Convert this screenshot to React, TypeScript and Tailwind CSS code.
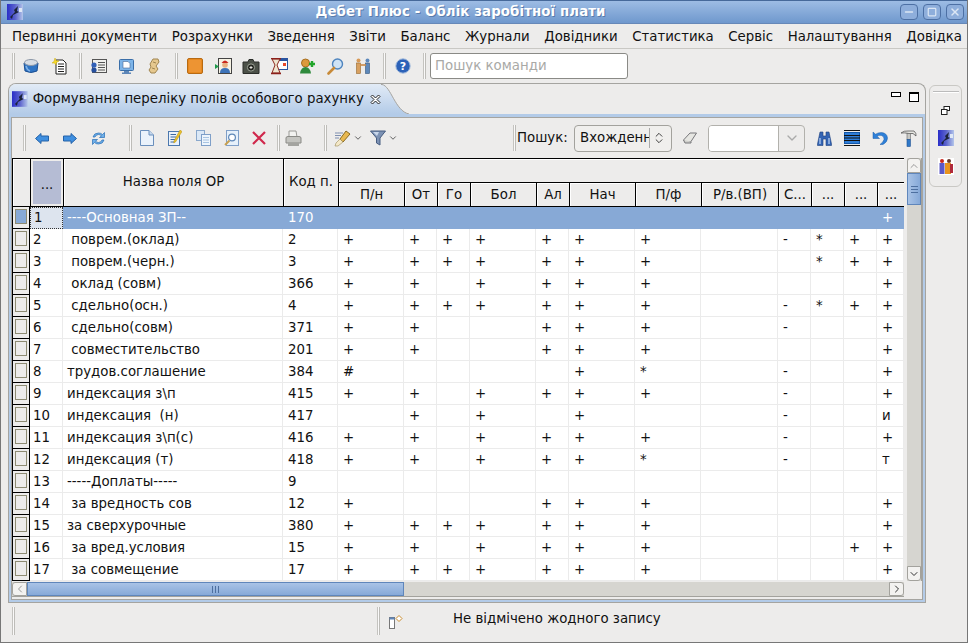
import React from 'react'
import { ChevronDown, ChevronLeft, ChevronRight, ChevronUp, ChevronsUpDown, Minus, Square, X } from 'lucide-react'

const menus = ['Первинні документи', 'Розрахунки', 'Зведення', 'Звіти', 'Баланс', 'Журнали', 'Довідники', 'Статистика', 'Сервіс', 'Налаштування', 'Довідка']

const subHeaders = ['П/н', 'От', 'Го', 'Бол', 'Ал', 'Нач', 'П/ф', 'Р/в.(ВП)', 'С...', '...', '...', '...']

const rows: [string, string, string][] = [
  ['----Основная ЗП--', '170', '           +'],
  [' поврем.(оклад)', '2', '+++++++ -*++'],
  [' поврем.(черн.)', '3', '+++++++  *++'],
  [' оклад (совм)', '366', '++ ++++    +'],
  [' сдельно(осн.)', '4', '+++++++ -*++'],
  [' сдельно(совм)', '371', '++  +++ -  +'],
  [' совместительство', '201', '++  +++    +'],
  ['трудов.соглашение', '384', '#    +* -  +'],
  ['индексация з\\п', '415', '++ ++++ -  +'],
  ['индексация  (н)', '417', ' + + +  -  и'],
  ['индексация з\\п(с)', '416', '++ ++++ -  +'],
  ['индексация (т)', '418', '++ +++* -  т'],
  ['-----Доплаты-----', '9', '            '],
  [' за вредность сов', '12', '+   +++    +'],
  ['за сверхурочные', '380', '+++++++    +'],
  [' за вред.условия', '15', '++ ++++   ++'],
  [' за совмещение', '17', '+++++++    +'],
]

const gridCols = 'grid grid-cols-[18px_33px_220px_55px_66px_33px_33px_66px_33px_66px_66px_77px_33px_33px_33px_27px]'

const AppIcon = ({ size = 16 }: { size?: number }) => (
  <svg width={size} height={size} viewBox="0 0 16 16">
    <defs>
      <linearGradient id="ai" x1="0" x2="1" y1="0" y2="0">
        <stop offset="0" stopColor="#2a2ec8" />
        <stop offset="0.5" stopColor="#5a62cc" />
        <stop offset="1" stopColor="#b4c6ea" />
      </linearGradient>
    </defs>
    <rect width="16" height="16" fill="url(#ai)" />
    <path d="M3 13 L8 8 L7 6 L11 2 L10 7 L12 8 L6 11 L5 15 Z" fill="#1a2238" />
    <rect x="12" y="4" width="3" height="4" fill="#dfe8f6" />
  </svg>
)

const Tub = () => (
  <svg width="16" height="16" viewBox="0 0 16 16">
    <path d="M1 5 L15 5 L14 13 Q8 16 2 13 Z" fill="#2f74c4" stroke="#1c4f92" />
    <ellipse cx="8" cy="4.5" rx="6.5" ry="3" fill="#d8dde4" stroke="#8d98a8" />
    <path d="M3 8 Q4 12 7 13" stroke="#7fb2e8" strokeWidth="1.5" fill="none" />
  </svg>
)

const NewDoc = () => (
  <svg width="17" height="17" viewBox="0 0 17 17">
    <path d="M5 2 H12 L15 5 V16 H5 Z" fill="#fff" stroke="#222" />
    <path d="M7 6 H13 M7 8.5 H13 M7 11 H13 M7 13.5 H13" stroke="#222" />
    <path d="M4 0 L5 2.5 L8 3 L5.5 4.5 L5 7 L3.5 5 L1 5 L3 3.5 Z" fill="#f6d92a" stroke="#c9a80f" strokeWidth=".5" />
  </svg>
)

const ListGear = () => (
  <svg width="17" height="16" viewBox="0 0 17 16">
    <rect x="2.5" y="1.5" width="14" height="13" fill="#f1f1ee" stroke="#555" />
    <path d="M8 4.5 H15 M8 7 H15 M8 9.5 H15 M8 12 H15" stroke="#555" />
    <circle cx="4" cy="7" r="2.6" fill="#3160b8" />
    <circle cx="4" cy="12" r="2.6" fill="#27509e" />
  </svg>
)

const Monitor = () => (
  <svg width="17" height="17" viewBox="0 0 17 17">
    <rect x="1.5" y="1.5" width="14" height="11" rx="1" fill="#7db4e8" stroke="#3a6ea8" />
    <path d="M5 3.5 H10 L12 5.5 V10 H5 Z" fill="#fff" stroke="#4a6a94" strokeWidth=".6" />
    <path d="M6 13 H11 V14.5 H13 V16 H4 V14.5 H6 Z" fill="#5d86b8" />
  </svg>
)

const ScrollIcon = () => (
  <svg width="12" height="16" viewBox="0 0 12 16">
    <path d="M5 1 H10 L11 4 L8 8 L10 11 L7 15 H3 L1 12 L3 9 L2 6 Z" fill="#e6c88e" stroke="#a08550" />
    <path d="M5 4 L8 5 M4 10 L7 11" stroke="#a08550" />
  </svg>
)

const OrangeBox = () => (
  <svg width="16" height="16" viewBox="0 0 16 16">
    <rect x=".5" y=".5" width="15" height="15" rx="1.5" fill="#e8891e" stroke="#b86a12" />
    <rect x="2" y="2" width="12" height="12" fill="#ed9433" />
  </svg>
)

const Portrait = () => (
  <svg width="17" height="16" viewBox="0 0 17 16">
    <rect x="3.5" y=".5" width="13" height="15" fill="#f6f2e4" stroke="#444" />
    <circle cx="10" cy="7" r="2.8" fill="#e8b080" />
    <path d="M6.5 5 Q10 0 13.5 5 Z" fill="#c8281e" />
    <path d="M5 15 Q5 10 10 10 Q15 10 15 15 Z" fill="#3c72b8" />
    <path d="M0 6 L4 8.5 L0 11 Z" fill="#1f9a4a" />
  </svg>
)

const Camera = () => (
  <svg width="18" height="15" viewBox="0 0 18 15">
    <path d="M1 3 H6 L7 0.5 H11 L12 3 H17 V14.5 H1 Z" fill="#4c5148" stroke="#2a2c28" />
    <circle cx="9" cy="8.5" r="3.6" fill="#23251f" stroke="#9aa094" />
    <path d="M7.5 8.5 H10.5 M9 7 V10" stroke="#e6e6e0" />
  </svg>
)

const Hourglass = () => (
  <svg width="17" height="17" viewBox="0 0 17 17">
    <rect x="5.5" y=".5" width="11" height="11" fill="#fff" stroke="#2a55a0" />
    <rect x="5.5" y=".5" width="11" height="2.5" fill="#2a55a0" />
    <rect x="12" y="5" width="3" height="3" fill="#e84a2a" />
    <path d="M1 1 H9 L6 7 L9 15 H1 L4 7 Z" fill="#eee6d0" stroke="#8c2a20" />
    <path d="M0 .5 H10 M0 15.5 H10" stroke="#8c1f1a" strokeWidth="1.6" />
  </svg>
)

const PersonAdd = () => (
  <svg width="17" height="16" viewBox="0 0 17 16">
    <circle cx="6.5" cy="5" r="4" fill="#dc9a3c" stroke="#a66e20" />
    <path d="M1 15.5 Q2 9 6.5 9 Q11 9 12 15.5 Z" fill="#2f8a3c" />
    <path d="M13 3 V9 M10 6 H16" stroke="#22a52a" strokeWidth="2.4" />
  </svg>
)

const Lens = () => (
  <svg width="17" height="17" viewBox="0 0 17 17">
    <circle cx="10.5" cy="6" r="5" fill="#cfe3f6" stroke="#4e84be" strokeWidth="1.4" />
    <path d="M7 10 L1.5 15.5" stroke="#c88a38" strokeWidth="2.6" strokeLinecap="round" />
  </svg>
)

const Handshake = () => (
  <svg width="16" height="16" viewBox="0 0 16 16">
    <circle cx="3.5" cy="2.5" r="2" fill="#d89a58" />
    <rect x="1.5" y="5" width="4" height="10.5" fill="#d8a060" stroke="#96682e" strokeWidth=".6" />
    <circle cx="12.5" cy="2.5" r="2" fill="#5c88bc" />
    <rect x="10.5" y="5" width="4" height="10.5" fill="#5d88ba" stroke="#34557e" strokeWidth=".6" />
    <path d="M5 7 H11" stroke="#c88a48" strokeWidth="1.6" />
  </svg>
)

const HelpIcon = () => (
  <svg width="16" height="16" viewBox="0 0 16 16">
    <circle cx="8" cy="8" r="7.2" fill="#2c62b8" stroke="#a5bcdc" />
    <text x="8" y="12" textAnchor="middle" fontSize="11" fontWeight="700" fill="#fff" fontFamily="DejaVu Sans">?</text>
  </svg>
)

const ArrowIcon = ({ dir }: { dir: 'left' | 'right' }) => (
  <svg width="14" height="11" viewBox="0 0 14 11">
    <path
      d={dir === 'left' ? 'M.5 5.5 L6 .5 V3 H13.5 V8 H6 V10.5 Z' : 'M13.5 5.5 L8 .5 V3 H.5 V8 H8 V10.5 Z'}
      fill="#3f8fe0"
      stroke="#2462a8"
    />
  </svg>
)

const Refresh = () => (
  <svg width="15" height="15" viewBox="0 0 15 15">
    <path d="M2 6 Q3 2 7.5 2 Q10 2 11.5 3.5 L13.5 1.5 V6.5 H8.5 L10.5 4.8 Q9 3.5 7.5 3.5 Q5 3.5 4 6 Z" fill="#6fb0ea" stroke="#2a6eb4" strokeWidth=".7" />
    <path d="M13 9 Q12 13 7.5 13 Q5 13 3.5 11.5 L1.5 13.5 V8.5 H6.5 L4.5 10.2 Q6 11.5 7.5 11.5 Q10 11.5 11 9 Z" fill="#6fb0ea" stroke="#2a6eb4" strokeWidth=".7" />
  </svg>
)

const Page = () => (
  <svg width="14" height="16" viewBox="0 0 14 16">
    <path d="M.5 .5 H9 L13.5 5 V15.5 H.5 Z" fill="#eaf2fb" stroke="#6a8fbc" />
    <path d="M9 .5 V5 H13.5" fill="#c4d8ee" stroke="#6a8fbc" />
  </svg>
)

const EditPage = () => (
  <svg width="14" height="16" viewBox="0 0 14 16">
    <rect x=".5" y="1.5" width="11" height="14" fill="#eaf2fb" stroke="#4c78ae" />
    <path d="M2.5 4.5 H8 M2.5 7 H8 M2.5 9.5 H7 M2.5 12 H6" stroke="#3c68a0" />
    <path d="M12 0 L14 1.5 L7.5 12 L5.8 13 L6 11 Z" fill="#ecc12a" stroke="#b08c10" strokeWidth=".5" />
  </svg>
)

const CopyPage = () => (
  <svg width="15" height="16" viewBox="0 0 15 16">
    <rect x=".5" y=".5" width="8" height="10" fill="#dbe8f6" stroke="#8aa8cc" />
    <rect x="5.5" y="4.5" width="9" height="11" fill="#eef5fc" stroke="#7f9fc8" />
    <path d="M7 7.5 H13 M7 10 H13 M7 12.5 H13" stroke="#a8c4e2" />
  </svg>
)

const FindPage = () => (
  <svg width="15" height="16" viewBox="0 0 15 16">
    <rect x="2.5" y=".5" width="12" height="15" fill="#e6f0fa" stroke="#7f9fc8" />
    <circle cx="8" cy="7.5" r="3.4" fill="#fff" stroke="#5f88b8" strokeWidth="1.2" />
    <path d="M5.5 10.5 L1 15" stroke="#c8a050" strokeWidth="2" />
  </svg>
)

const RedX = () => (
  <svg width="14" height="14" viewBox="0 0 14 14">
    <path d="M1 1 L13 13 M13 1 L1 13" stroke="#d0284c" strokeWidth="2.2" />
  </svg>
)

const Printer = () => (
  <svg width="17" height="17" viewBox="0 0 17 17">
    <path d="M4 1 H11 L12 7 H4 Z" fill="#f2f2f0" stroke="#9a9a96" />
    <path d="M1 8 Q1 6.5 3 6.5 H14 Q16 6.5 16 8 V13 H1 Z" fill="#c4c4c0" stroke="#8a8a86" />
    <rect x="3" y="13" width="11" height="3" fill="#a4a4a0" />
  </svg>
)

const Brush = () => (
  <svg width="17" height="17" viewBox="0 0 17 17">
    <path d="M12 1 L16 4 L9 12 L6 9 Z" fill="#e8b850" stroke="#8a6a20" />
    <path d="M6 9 L9 12 L4 16 L1 16 L2 13 Z" fill="#f4e8c8" stroke="#9a8a58" strokeWidth=".6" />
    <path d="M1 3 H9 M1 5.5 H7 M1 8 H5" stroke="#7f8fb0" />
  </svg>
)

const Funnel = () => (
  <svg width="16" height="16" viewBox="0 0 16 16">
    <path d="M.5 1 H15.5 L10 8 V15 L6.5 13 V8 Z" fill="#7d92b4" stroke="#465c80" />
    <path d="M3 2 H9 L7 6 Z" fill="#c8d6ea" />
  </svg>
)

const Eraser = () => (
  <svg width="14" height="12" viewBox="0 0 14 12">
    <path d="M.5 8 L7 1 H13.5 L8 9.5 H2 Z" fill="#e6e6e2" stroke="#77777a" />
    <path d="M.5 8 L2 11 H8 L8 9.5" fill="#cfcfcb" stroke="#77777a" />
  </svg>
)

const Binoculars = () => (
  <svg width="15" height="15" viewBox="0 0 15 15">
    <path d="M3 1 H6 V5 H9 V1 H12 L14.5 13 V14.5 H9 V8 H6 V14.5 H.5 V13 Z" fill="#3464b4" stroke="#1e3f7c" strokeWidth=".6" />
    <path d="M3 7 V13 M12 7 V13" stroke="#a8c4ec" strokeWidth="1.4" />
  </svg>
)

const Lines = () => (
  <svg width="16" height="16" viewBox="0 0 16 16">
    <rect x=".5" y="2.5" width="15" height="11" fill="#2f7ed8" stroke="#1256a8" />
    <path d="M0 .5 H16 M0 5.5 H16 M0 8 H16 M0 10.5 H16 M0 15.5 H16" stroke="#111" />
  </svg>
)

const UndoIcon = () => (
  <svg width="16" height="15" viewBox="0 0 16 15">
    <path d="M1 1 V7.5 H7.5 L5 5.2 Q7 4 9.5 4.5 Q12.5 5.5 12 8.5 Q11.5 11 8 13.5 H11 Q15.5 11 15.5 7 Q15 2 9.5 1.5 Q6 1.5 3.5 3.2 Z" fill="#2f80d8" stroke="#1a5ca8" strokeWidth=".5" />
  </svg>
)

const Hammer = () => (
  <svg width="17" height="17" viewBox="0 0 17 17">
    <path d="M1 3 Q4 .5 8 1 H14 Q16.5 3 16 6 L13 3.5 H9 Q4 2.5 1 3 Z" fill="#e6e6e2" stroke="#555" strokeWidth=".8" />
    <rect x="7" y="3.5" width="3.4" height="6" fill="#c8c8c4" stroke="#666" strokeWidth=".6" />
    <rect x="7" y="9.5" width="3.4" height="7" fill="#2f78c8" stroke="#1e5090" strokeWidth=".6" />
  </svg>
)

const People = () => (
  <svg width="16" height="17" viewBox="0 0 16 17">
    <rect width="16" height="17" fill="#fff" />
    <circle cx="4" cy="3" r="2" fill="#c8281e" />
    <circle cx="11" cy="3" r="2" fill="#6a3a2a" />
    <rect x="1.5" y="5" width="5" height="11" fill="#5a58c8" />
    <rect x="7" y="5" width="6" height="11" fill="#e8941e" />
    <rect x="12" y="6" width="3" height="9" fill="#b02a3a" />
  </svg>
)

const CloseTab = () => (
  <svg width="11" height="11" viewBox="0 0 11 11" className="ml-[6px] flex-none">
    <path d="M1 2.5 L2.5 1 L5.5 4 L8.5 1 L10 2.5 L7 5.5 L10 8.5 L8.5 10 L5.5 7 L2.5 10 L1 8.5 L4 5.5 Z" fill="#fff" stroke="#222" />
  </svg>
)

const Slot = ({ children }: { children: React.ReactNode }) => (
  <div className="w-7 flex-none flex items-center justify-center">{children}</div>
)

const Grip = ({ className = 'h-[26px]' }: { className?: string }) => (
  <div className={`w-[2px] flex-none border-l border-[#c4c3bf] bg-white/70 shadow-[1px_0_0_#bdbcb8] ${className}`} />
)

const Caret = () => <ChevronDown className="w-2.5 h-2.5 text-[#444]" strokeWidth={2} />

const ScrollButton = ({ children, className = '' }: { children: React.ReactNode; className?: string }) => (
  <div className={`flex-none flex items-center justify-center bg-[#f3f2f0] border border-[#a3a29d] text-[#333] ${className}`}>
    {children}
  </div>
)

function Cell({ text, selected, pad = 'pl-[5px]' }: { text: string; selected: boolean; pad?: string }) {
  return (
    <div className={`h-[22px] leading-[22px] whitespace-pre overflow-hidden ${pad} ${selected ? 'bg-[#87a9d6] text-white' : 'bg-white border-r border-b border-[#ebebeb] text-[#111]'}`}>
      {text}
    </div>
  )
}

function TableRow({ index, row }: { index: number; row: [string, string, string] }) {
  const selected = index === 0
  const marks = row[2].padEnd(12, ' ').split('')
  return (
    <div className={gridCols}>
      <div className="h-[22px] border-l border-r border-b border-black bg-[#edeceb] p-[2px] flex">
        <div className={`w-[13px] h-[15px] border border-[#8d8b73] ${selected ? 'bg-[#87a9d6]' : 'bg-[#edeceb]'}`} />
      </div>
      <div className={`h-[22px] pl-[3px] text-[#111] ${selected ? 'leading-[20px] bg-[#dde4ee] border border-dotted border-[#333]' : 'leading-[22px] bg-white border-r border-b border-[#ebebeb]'}`}>
        {index + 1}
      </div>
      <Cell text={row[0]} selected={selected} pad="pl-[4px]" />
      <Cell text={row[1]} selected={selected} />
      {marks.map((m, i) => (
        <Cell key={i} text={m === ' ' ? '' : m} selected={selected} />
      ))}
    </div>
  )
}

export default function App() {
  return (
    <div className="w-[968px] h-[643px] overflow-hidden flex flex-col bg-[#edeceb] border-l border-r border-b border-[#777] font-['DejaVu_Sans',sans-serif] text-[13.33px] text-[#111]">
      {/* title bar */}
      <div className="h-6 flex-none flex items-center pl-[6px] pr-[3px] border-t border-[#46699a] bg-gradient-to-b from-[#9dbce4] to-[#6f98cd] border-b border-b-[#6688b8]">
        <AppIcon />
        <div className="flex-1 text-center font-bold text-white tracking-[0.1px] pr-[2px] [text-shadow:1px_1px_0_#5a7cac]">Дебет Плюс - Облік заробітної плати</div>
        <div className="flex gap-[5px]">
          {[
            <Minus key="a" className="w-3 h-3" strokeWidth={3} />,
            <Square key="b" className="w-2.5 h-2.5" strokeWidth={3} />,
            <X key="c" className="w-3 h-3" strokeWidth={3} />,
          ].map((ic, i) => (
            <div key={i} className="w-[18px] h-[16px] rounded-[4px] border border-[#4d70a4] bg-[#8eaedb] flex items-center justify-center text-[#dbe6f4]">{ic}</div>
          ))}
        </div>
      </div>

      {/* menu */}
      <div className="h-[25px] flex-none flex items-center gap-[14.5px] pl-[11px] pt-[1px] border-b border-[#c9c8c4]">
        {menus.map((m) => (
          <span key={m} className="whitespace-nowrap">{m}</span>
        ))}
      </div>

      {/* main toolbar */}
      <div className="h-[34px] flex-none flex items-center pl-[11px]">
        <Grip />
        <div className="w-[3px]" />
        <Slot><Tub /></Slot>
        <Slot><NewDoc /></Slot>
        <div className="w-[6px]" />
        <Grip />
        <div className="w-[3px]" />
        <Slot><ListGear /></Slot>
        <Slot><Monitor /></Slot>
        <Slot><ScrollIcon /></Slot>
        <div className="w-[7px]" />
        <Grip />
        <div className="w-[4px]" />
        <Slot><OrangeBox /></Slot>
        <Slot><Portrait /></Slot>
        <Slot><Camera /></Slot>
        <Slot><Hourglass /></Slot>
        <Slot><PersonAdd /></Slot>
        <Slot><Lens /></Slot>
        <Slot><Handshake /></Slot>
        <div className="w-[6px]" />
        <Grip />
        <div className="w-[4px]" />
        <Slot><HelpIcon /></Slot>
        <div className="w-[6px]" />
        <Grip />
        <div className="w-[5px]" />
        <div className="w-[198px] h-[26px] bg-white border border-[#8a8a86] rounded-[3px] pl-[4px] leading-[24px] text-[#a9a9a6]">Пошук команди</div>
      </div>

      {/* workspace */}
      <div className="flex-1 min-h-0 flex items-start pl-[7px]">
        <div className="w-[918px] h-[520px] flex flex-col">
          {/* tab strip */}
          <div className="h-[31px] flex-none flex border-t border-l border-r border-[#a5a4a0] rounded-t-lg overflow-hidden">
            <div className="w-[372px] flex-none flex items-center pl-[3px] bg-gradient-to-b from-[#e2ebf6] to-[#b3cbe8]">
              <AppIcon />
              <span className="ml-[5px] whitespace-nowrap">Формування переліку полів особового рахунку</span>
              <CloseTab />
            </div>
            <svg width="30" height="30" viewBox="0 0 30 30" className="flex-none">
              <defs>
                <linearGradient id="tb" x1="0" x2="0" y1="0" y2="1">
                  <stop offset="0" stopColor="#e2ebf6" />
                  <stop offset="1" stopColor="#b3cbe8" />
                </linearGradient>
              </defs>
              <path d="M0 0 H1 C10 2 14 27 28 30 H0 Z" fill="url(#tb)" />
              <path d="M0 .5 H1 C10 2 14 27 28 30" fill="none" stroke="#a5a4a0" />
            </svg>
            <div className="flex-1 flex items-start justify-end gap-[8px] pt-[8px] pr-[6px]">
              <div className="w-[10px] h-[5px] border border-black bg-white" />
              <div className="w-[10px] h-[10px] border border-black border-t-2 bg-white" />
            </div>
          </div>

          {/* tab body */}
          <div className="flex-1 min-h-0 border-x border-b border-[#a5a4a0] flex flex-col">
            <div className="flex-1 min-h-0 border-x-2 border-b-2 border-t-[3px] border-[#b3cbe8] flex flex-col">
              <div className="flex-1 min-h-0 border border-[#a5a4a0] flex flex-col">
                {/* tab toolbar */}
                <div className="h-[40px] flex-none flex items-center pl-[11px]">
                  <Grip />
                  <div className="w-[3px]" />
                  <Slot><ArrowIcon dir="left" /></Slot>
                  <Slot><ArrowIcon dir="right" /></Slot>
                  <Slot><Refresh /></Slot>
                  <div className="w-[17px]" />
                  <Grip />
                  <div className="w-[2px]" />
                  <Slot><Page /></Slot>
                  <Slot><EditPage /></Slot>
                  <Slot><CopyPage /></Slot>
                  <Slot><FindPage /></Slot>
                  <Slot><RedX /></Slot>
                  <div className="w-[4px]" />
                  <Grip />
                  <Slot><Printer /></Slot>
                  <div className="w-[17px]" />
                  <Grip />
                  <div className="w-[8px]" />
                  <div className="w-[36px] flex-none flex items-center gap-[2px]"><Brush /><Caret /></div>
                  <div className="w-[36px] flex-none flex items-center gap-[2px]"><Funnel /><Caret /></div>
                  <div className="w-[107px]" />
                  <Grip />
                  <span className="ml-[2px] w-[57px] flex-none whitespace-nowrap">Пошук:</span>
                  <div className="w-[98px] h-[27px] flex-none flex items-center rounded-[4px] border border-[#a3a29d] bg-[#f0efed] pl-[5px] pr-[4px]">
                    <span className="w-[70px] overflow-hidden whitespace-nowrap border-r border-[#aaa]">Вхожденн</span>
                    <ChevronsUpDown className="ml-[2px] w-[14px] h-[14px] text-[#333]" strokeWidth={1.6} />
                  </div>
                  <div className="w-[36px] flex-none flex justify-center"><Eraser /></div>
                  <div className="w-[97px] h-[27px] flex-none flex rounded-[4px] border border-[#b2b1ac] overflow-hidden">
                    <div className="w-[70px] bg-white border-r border-[#b2b1ac]" />
                    <div className="flex-1 flex items-center justify-center"><ChevronDown className="w-4 h-4 text-[#aaa]" /></div>
                  </div>
                  <div className="w-[5px]" />
                  <Slot><Binoculars /></Slot>
                  <Slot><Lines /></Slot>
                  <Slot><UndoIcon /></Slot>
                  <Slot><Hammer /></Slot>
                </div>

                {/* grid + vertical scroll */}
                <div className="flex-1 min-h-0 flex">
                  <div className="w-[892px] flex-none flex flex-col">
                    <div className={`${gridCols} border-t border-black`}>
                      <div className="row-span-2 border-l border-b border-black shadow-[inset_1px_1px_0_#fff]" />
                      <div className="row-span-2 border-l border-b border-black p-[2px] flex">
                        <div className="flex-1 bg-[#b5bcd4] flex items-center justify-center pt-[5px]">...</div>
                      </div>
                      <div className="row-span-2 border-l border-b border-black shadow-[inset_1px_1px_0_#fff] flex items-center justify-center pb-[2px]">Назва поля ОР</div>
                      <div className="row-span-2 border-l border-b border-black shadow-[inset_1px_1px_0_#fff] flex items-center justify-center pb-[2px]">Код п.</div>
                      <div className="col-span-12 h-6 border-l border-b border-black shadow-[inset_1px_1px_0_#fff]" />
                      {subHeaders.map((h, i) => (
                        <div key={i} className="h-6 overflow-hidden border-l border-b border-black shadow-[inset_1px_1px_0_#fff] flex items-center justify-center">{h}</div>
                      ))}
                    </div>
                    {rows.map((r, i) => (
                      <TableRow key={i} index={i} row={r} />
                    ))}
                  </div>
                  <div className="ml-[3px] w-[15px] h-[423px] flex-none flex flex-col bg-[#d6d5d0] border-r border-[#a3a29d]">
                    <ScrollButton className="h-[15px] rounded-t-[3px]"><ChevronUp className="w-3 h-3 text-[#999]" /></ScrollButton>
                    <div className="h-[32px] flex-none bg-gradient-to-r from-[#a9c3e6] to-[#86a9d8] border border-[#5f86bb] flex items-center justify-center">
                      <svg width="7" height="7" viewBox="0 0 7 7"><path d="M0 .5 H7 M0 3.5 H7 M0 6.5 H7" stroke="#4d6f9f" /></svg>
                    </div>
                    <div className="flex-1" />
                    <ScrollButton className="h-[15px] rounded-b-[3px]"><ChevronDown className="w-3 h-3 text-[#333]" /></ScrollButton>
                  </div>
                </div>

                {/* horizontal scroll */}
                <div className="h-[15px] flex-none mb-[2px] w-[892px] flex bg-[#d6d5d0] border-b border-[#a3a29d]">
                  <ScrollButton className="w-[15px] rounded-l-[3px]"><ChevronLeft className="w-3 h-3 text-[#999]" /></ScrollButton>
                  <div className="w-[377px] flex-none bg-gradient-to-b from-[#a9c3e6] to-[#86a9d8] border border-[#5f86bb] flex items-center justify-center">
                    <svg width="7" height="7" viewBox="0 0 7 7"><path d="M.5 0 V7 M3.5 0 V7 M6.5 0 V7" stroke="#4d6f9f" /></svg>
                  </div>
                  <div className="flex-1" />
                  <ScrollButton className="w-[15px] rounded-r-[3px]"><ChevronRight className="w-3 h-3 text-[#333]" /></ScrollButton>
                </div>
              </div>
            </div>
          </div>
        </div>

        {/* right trim */}
        <div className="ml-[3px] mt-[2px] w-[33px] h-[102px] flex-none flex flex-col items-center border border-[#c9c8c4] rounded-[6px]">
          <div className="mt-[5px] w-[26px] border-t border-[#bbb] shadow-[0_1px_0_#fff]" />
          <svg width="9" height="9" viewBox="0 0 9 9" className="mt-[14px]">
            <rect x="3" y=".5" width="5.5" height="4" fill="#fff" stroke="#222" />
            <rect x=".5" y="3.5" width="5.5" height="5" fill="#fff" stroke="#222" />
          </svg>
          <div className="mt-[15px]"><AppIcon /></div>
          <div className="mt-[12px]"><People /></div>
        </div>
      </div>

      {/* status bar */}
      <div className="h-[39px] flex-none flex items-start pl-[11px] pt-[4px]">
        <Grip className="h-[28px]" />
        <div className="w-[363px]" />
        <Grip className="h-[28px]" />
        <svg width="14" height="14" viewBox="0 0 14 14" className="ml-[10px] mt-[8px] flex-none">
          <rect x=".5" y="2.5" width="5" height="11" fill="#fff" stroke="#777" />
          <rect x=".5" y="2.5" width="5" height="2" fill="#5f86bb" />
          <path d="M10 .5 L13 3.5 L10 6.5 L7 3.5 Z" fill="#fff" stroke="#c88a2c" />
        </svg>
        <span className="ml-[50px] mt-[2px] whitespace-nowrap">Не відмічено жодного запису</span>
      </div>
    </div>
  )
}
